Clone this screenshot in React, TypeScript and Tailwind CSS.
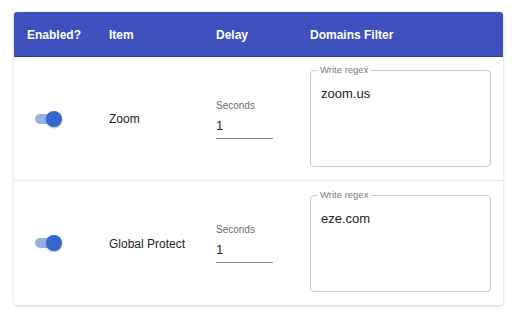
import React from "react";

function Toggle() {
  return (
    <div className="relative w-[28px] h-[16px] flex items-center">
      <div className="ml-[1px] w-[23px] h-[10px] rounded-full bg-[#97b1e6]" />
      <div className="absolute left-[12px] top-0 w-[16px] h-[16px] rounded-full bg-[#3468cf] shadow-[0_1px_2px_rgba(0,0,0,0.3)]" />
    </div>
  );
}

function Row({ name, domain, last }: { name: string; domain: string; last?: boolean }) {
  return (
    <div className={`flex h-[124px] items-center ${last ? "" : "border-b border-[#e6e6e6]"}`}>
      <div className="w-[95px] pl-[20px] flex items-center">
        <Toggle />
      </div>
      <div className="w-[107px] text-[12px] text-[#222] pt-[1px]">{name}</div>
      <div className="w-[94px] flex flex-col pt-[1px]">
        <div className="text-[10px] text-[#6b6b6b] leading-[12px]">Seconds</div>
        <div className="mt-[6px] w-[57px] border-b border-[#8a8a8a] pb-[4px] text-[13px] text-[#222] leading-[16px]">1</div>
      </div>
      <div className="flex-1 pr-[12px]">
        <div className="relative h-[97px] w-[181px] rounded-[4px] border border-[#c8c8c8]">
          <div className="absolute left-[6px] top-[-7px] bg-white px-[3px] text-[9.5px] leading-[12px] text-[#7a7a7a]">Write regex</div>
          <div className="pl-[10px] pt-[15px] text-[13px] leading-[16px] text-[#222]">{domain}</div>
        </div>
      </div>
    </div>
  );
}

export default function App() {
  return (
    <div className="w-[512px] h-[320px] bg-white pt-[12px] pl-[14px]" style={{ fontFamily: '"Liberation Sans", Arial, sans-serif' }}>
      <div className="w-[489px] rounded-[3px] bg-white shadow-[0_1px_3px_rgba(0,0,0,0.2)] overflow-hidden">
        <div className="flex h-[45px] items-center pt-[2px] bg-[#3f4fbe] text-white text-[12px] font-bold border-b border-[#2e3a99]">
          <div className="w-[95px] pl-[13px]">Enabled?</div>
          <div className="w-[107px]">Item</div>
          <div className="w-[94px]">Delay</div>
          <div className="flex-1">Domains Filter</div>
        </div>
        <Row name="Zoom" domain="zoom.us" />
        <Row name="Global Protect" domain="eze.com" last />
      </div>
    </div>
  );
}
